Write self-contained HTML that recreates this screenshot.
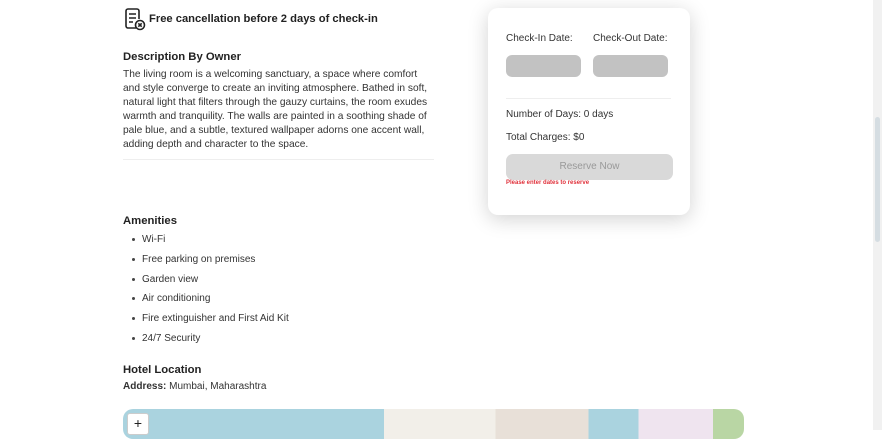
<!DOCTYPE html>
<html><head><style>
body{margin:0;width:882px;height:430px;overflow:hidden;background:#fff;font-family:"Liberation Sans",sans-serif;color:#222;position:relative}
.a{position:absolute}
p{margin:0}
.desc{left:123px;top:68px;width:312px;font-size:10.2px;line-height:14px;color:#333}
h3{margin:0;font-size:11.3px;font-weight:bold;color:#222}
ul{margin:0;padding:0;list-style:none}
li{font-size:10px;color:#333;height:19.8px;position:relative;padding-left:19px}
li:before{content:"";position:absolute;left:9px;top:4px;width:3px;height:3px;border-radius:50%;background:#444}
.card{left:488px;top:8px;width:202px;height:207px;background:#fff;border-radius:10px;box-shadow:0 4px 20px rgba(0,0,0,.18)}
.lbl{font-size:10px;color:#333}
.inp{background:#c2c2c2;border-radius:6px;width:75px;height:22px}
</style></head><body>
<svg class="a" style="left:124px;top:8px" width="22" height="23" viewBox="0 0 22 23" fill="none" stroke="#222" stroke-width="1.6"><path d="M12 20H4a2 2 0 0 1-2-2V3a2 2 0 0 1 2-2h9a2 2 0 0 1 2 2v8"/><path d="M5 6h7M5 10h7M5 14h4"/><circle cx="16" cy="17" r="4.5"/><path d="M14.3 15.3l3.4 3.4M17.7 15.3l-3.4 3.4"/></svg>
<div class="a" style="left:149px;top:13px;font-size:11.2px;font-weight:bold">Free cancellation before 2 days of check-in</div>
<h3 class="a" style="left:123px;top:51px">Description By Owner</h3>
<p class="a desc">The living room is a welcoming sanctuary, a space where comfort and style converge to create an inviting atmosphere. Bathed in soft, natural light that filters through the gauzy curtains, the room exudes warmth and tranquility. The walls are painted in a soothing shade of pale blue, and a subtle, textured wallpaper adorns one accent wall, adding depth and character to the space.</p>
<div class="a" style="left:123px;top:159px;width:311px;height:1px;background:#eee"></div>
<h3 class="a" style="left:123px;top:215px">Amenities</h3>
<ul class="a" style="left:123px;top:234px">
<li>Wi-Fi</li><li>Free parking on premises</li><li>Garden view</li><li>Air conditioning</li><li>Fire extinguisher and First Aid Kit</li><li>24/7 Security</li></ul>
<h3 class="a" style="left:123px;top:364px">Hotel Location</h3>
<div class="a" style="left:123px;top:381px;font-size:10px;color:#333"><b>Address:</b> Mumbai, Maharashtra</div>
<div class="a" style="left:123px;top:409px;width:621px;height:30px;border-radius:10px;overflow:hidden;background:linear-gradient(90deg,#aad3df 0 42%,#f2efe9 42% 60%,#e8e0d8 60% 75%,#aad3df 75% 83%,#efe4ef 83% 95%,#b9d6a4 95%)">
<div class="a" style="left:4px;top:4px;width:20px;height:20px;background:#fff;border:1px solid #ccc;border-radius:3px;font-size:14px;text-align:center;line-height:18px">+</div></div>
<div class="a card">
<div class="a lbl" style="left:18px;top:25px">Check-In Date:</div>
<div class="a lbl" style="left:105px;top:25px">Check-Out Date:</div>
<div class="a inp" style="left:18px;top:47px"></div>
<div class="a inp" style="left:105px;top:47px"></div>
<div class="a" style="left:18px;top:90px;width:165px;height:1px;background:#eee"></div>
<div class="a lbl" style="left:18px;top:101px">Number of Days: 0 days</div>
<div class="a lbl" style="left:18px;top:124px">Total Charges: $0</div>
<div class="a" style="left:18px;top:146px;width:167px;height:26px;background:#d9d9d9;border-radius:7px;text-align:center;line-height:26px;font-size:10px;color:#999">Reserve Now</div>
<div class="a" style="left:18px;top:172px;font-size:6px;color:#e0313b;font-weight:bold">Please enter dates to reserve</div>
</div>
<div class="a" style="left:873px;top:0;width:9px;height:430px;background:#f1f1f1"></div>
<div class="a" style="left:875px;top:117px;width:5px;height:125px;background:#d5dde2;border-radius:3px"></div>
</body></html>
